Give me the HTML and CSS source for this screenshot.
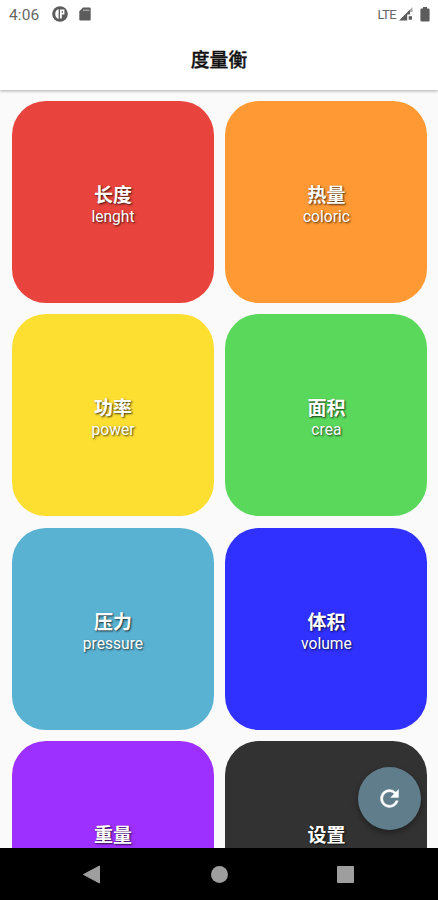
FILE: index.html
```html
<!DOCTYPE html>
<html lang="zh-CN">
<head>
<meta charset="utf-8">
<title>度量衡</title>
<link rel="stylesheet" href="styles.css">
</head>
<body>
<div class="screen">
  <header class="top">
    <div class="status">
      <span class="clock">4:06</span>
      <svg class="app-icon" viewBox="0 0 16 16"><circle cx="8" cy="8" r="7.8" fill="#5c5c5c"/><path d="M6.6 3A5.4 5.4 0 0 0 6.6 13Z" fill="#fff"/><path d="M8 3.4H12.4V8.4H9.8V12.6H8Z" fill="#fff"/><path d="M9.6 5H11V7H9.6Z" fill="#8a8a8a"/></svg>
      <svg class="sd-icon" viewBox="0 0 12 14"><path d="M4 .5H10.5Q11.7 .5 11.7 1.7V12.3Q11.7 13.5 10.5 13.5H1.5Q.3 13.5 .3 12.3V4.2Z" fill="#5c5c5c"/><path d="M4 3.3H10.4" stroke="#a0a0a0" stroke-width="1.6"/></svg>
      <span class="lte">LTE</span>
      <svg class="signal" viewBox="0 0 14 14"><path d="M0 13.4L11 2.5V7.5H8.2V13.4Z" fill="#5c5c5c"/><path d="M11 2.5L13.5 0V5H11Z" fill="#a8a8a8"/><path d="M9.7 9.2H13V12.7H9.7Z" fill="#5c5c5c"/></svg>
      <svg class="battery" viewBox="0 0 10 15"><path d="M3 0H7V1.6H8.4Q9.6 1.6 9.6 2.8V13.3Q9.6 14.5 8.4 14.5H1.6Q.4 14.5 .4 13.3V2.8Q.4 1.6 1.6 1.6H3Z" fill="#5c5c5c"/></svg>
    </div>
    <h1 class="title">度量衡</h1>
  </header>
  <main class="grid">
    <div class="tile red"><b>长度</b><span>lenght</span></div>
    <div class="tile orange"><b>热量</b><span>coloric</span></div>
    <div class="tile yellow"><b>功率</b><span>power</span></div>
    <div class="tile green"><b>面积</b><span>crea</span></div>
    <div class="tile teal"><b>压力</b><span>pressure</span></div>
    <div class="tile blue"><b>体积</b><span>volume</span></div>
    <div class="tile purple"><b>重量</b></div>
    <div class="tile dark"><b>设置</b></div>
  </main>
  <button class="fab" aria-label="refresh"><svg viewBox="0 0 24 24"><path d="M17.65 6.35A7.96 7.96 0 0 0 12 4a8 8 0 1 0 7.73 10h-2.08A6 6 0 1 1 12 6c1.66 0 3.14.69 4.22 1.78L13 11h7V4z" fill="#fff" stroke="#fff" stroke-width=".4"/></svg></button>
  <nav class="nav">
    <svg class="back" viewBox="0 0 17 19"><path d="M16.5 1V18L.5 9.5Z" fill="#9e9e9e" stroke="#9e9e9e" stroke-linejoin="round"/></svg>
    <i class="home"></i>
    <i class="recent"></i>
  </nav>
</div>
</body>
</html>
```
FILE: styles.css
```css
* { box-sizing: border-box; }
body { margin: 0; font-family: Roboto, "Noto Sans CJK SC", sans-serif; }
.screen {
  position: relative;
  display: flex;
  flex-direction: column;
  width: 438px;
  height: 900px;
  overflow: hidden;
  background: #fafafa;
}
.top {
  position: relative;
  flex: none;
  height: 90px;
  background: #fff;
  box-shadow: 0 1px 3px rgba(0, 0, 0, .32);
}
.status {
  display: flex;
  align-items: center;
  height: 28px;
  padding: 0 8px 0 9px;
  color: #666;
}
.clock { width: 43px; padding-top: 1px; font-size: 15.5px; letter-spacing: .1px; }
.app-icon { width: 16px; height: 16px; }
.sd-icon { width: 12px; height: 14px; margin-left: 11px; }
.lte { margin-left: auto; font-size: 13px; letter-spacing: -.6px; }
.signal { width: 14px; height: 14px; margin-left: 3px; }
.battery { width: 10px; height: 15px; margin-left: 7px; }
.title {
  margin: 0;
  height: 64px;
  line-height: 66px;
  font-size: 18.8px;
  font-weight: 500;
  text-align: center;
  color: #111;
  -webkit-text-stroke: .35px #111;
}
.grid {
  flex: 1;
  min-height: 0;
  overflow: hidden;
  display: grid;
  grid-template-columns: 202px 202px;
  grid-auto-rows: 202px;
  gap: 11.4px;
  padding: 11px 0 0 12px;
}
.tile {
  display: flex;
  flex-direction: column;
  align-items: center;
  padding-top: 84px;
  border-radius: 34px;
  color: #fff;
  text-shadow: 1px 1px 2px rgba(0, 0, 0, .75);
}
.tile b { font-size: 19px; line-height: 22px; font-weight: 700; }
.tile span { font-size: 15.6px; line-height: 20px; }
.red { background: #e8433c; }
.orange { background: #ff9933; }
.yellow { background: #fddf32; }
.green { background: #5ad85c; }
.teal { background: #5ab2d2; }
.blue { background: #3030ff; }
.purple { background: #9e30ff; }
.dark { background: #323232; }
.fab {
  position: absolute;
  left: 358px;
  top: 767px;
  width: 63px;
  height: 63px;
  padding: 0;
  display: grid;
  place-items: center;
  border: 0;
  border-radius: 50%;
  background: #607d8b;
  box-shadow: 0 3px 6px rgba(0, 0, 0, .35);
}
.fab svg { width: 27px; height: 27px; }
.nav {
  position: relative;
  flex: none;
  height: 52px;
  display: flex;
  align-items: center;
  padding-left: 83px;
  background: #000;
}
.back { width: 17px; height: 19px; }
.home { width: 17px; height: 17px; margin-left: 111px; border-radius: 50%; background: #9e9e9e; }
.recent { width: 17px; height: 17px; margin-left: 109px; border-radius: 1px; background: #9e9e9e; }
```
